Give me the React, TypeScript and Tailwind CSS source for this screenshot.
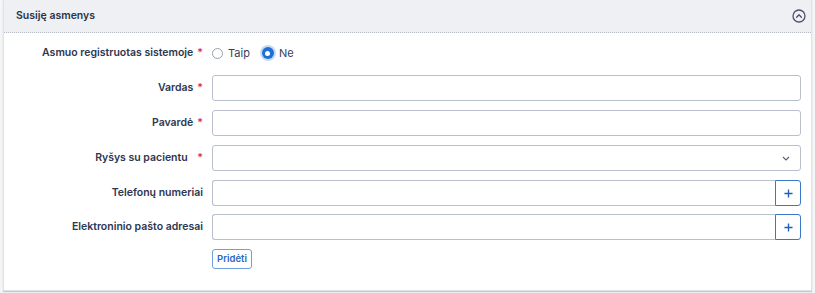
import React from "react";

const Req = () => <span className="text-[#d6343c] ml-[4px]">*</span>;

function Row({ label, children }: { label: React.ReactNode; children: React.ReactNode }) {
  return (
    <div className="flex items-center h-[26px]">
      <div className="w-[199px] shrink-0 text-right text-[10.5px] font-semibold text-[#2f3650]">{label}</div>
      <div className="ml-[9px] flex-1">{children}</div>
    </div>
  );
}

const inputCls = "w-full h-[26px] border border-[#b9bfcc] rounded-[3px] bg-white";

const Plus = () => (
  <div className="w-[26px] border border-[#3a78c8] rounded-r-[3px] flex items-center justify-center bg-white">
    <svg width="9" height="9" viewBox="0 0 10 10"><path d="M5 0.5 V9.5 M0.5 5 H9.5" stroke="#1f5fb8" strokeWidth="1.5" /></svg>
  </div>
);

export default function App() {
  return (
    <div className="w-[815px] h-[293px] bg-[#f4f5f7] px-[3px]" style={{ fontFamily: "Inter, 'Noto Sans', sans-serif" }}>
      <div className="bg-white border-x border-b border-[#dfe2e8] shadow-[0_1px_1px_rgba(0,0,0,0.18)] h-[291px]">
        <div className="h-[33px] bg-[#eef0f4] border-b border-dotted border-[#b8bcc6] flex items-center pl-[12px] pr-[5px] justify-between">
          <span className="text-[10.5px] font-semibold text-[#2d3447]">Susiję asmenys</span>
          <svg width="14" height="14" viewBox="0 0 14 14">
            <circle cx="7" cy="7" r="6" fill="none" stroke="#4a5169" strokeWidth="1.3" />
            <path d="M4.6 8.2 L7 5.8 L9.4 8.2" fill="none" stroke="#4a5169" strokeWidth="1.3" strokeLinecap="round" strokeLinejoin="round" />
          </svg>
        </div>
        <div className="pr-[10px]">
          <div className="flex items-center h-[20px] mt-[10px]">
            <div className="w-[199px] shrink-0 text-right text-[10.5px] font-semibold text-[#2f3650]">
              Asmuo registruotas sistemoje<Req />
            </div>
            <div className="ml-[9px] flex items-center text-[11px] text-[#3a4055]">
              <span className="w-[11px] h-[11px] rounded-full border border-[#9aa0ad] bg-white inline-block" />
              <span className="ml-[5px]">Taip</span>
              <span className="ml-[12px] w-[12px] h-[12px] rounded-full bg-[#1f6fd6] inline-flex items-center justify-center shadow-[0_0_0_2px_rgba(31,111,214,0.25)]">
                <span className="w-[5px] h-[5px] rounded-full bg-white" />
              </span>
              <span className="ml-[5px]">Ne</span>
            </div>
          </div>
          <div className="flex flex-col gap-[9px] mt-[12px]">
            <Row label={<>Vardas<Req /></>}>
              <div className={inputCls} />
            </Row>
            <Row label={<>Pavardė<Req /></>}>
              <div className={inputCls} />
            </Row>
            <Row label={<>Ryšys su pacientu <span className="ml-[3px]"></span><Req /></>}>
              <div className={inputCls + " flex items-center justify-end pr-[10px]"}>
                <svg width="8" height="5" viewBox="0 0 8 5">
                  <path d="M1 1 L4 4 L7 1" fill="none" stroke="#5a6073" strokeWidth="1.1" />
                </svg>
              </div>
            </Row>
            <Row label="Telefonų numeriai">
              <div className="flex h-[26px]">
                <div className="flex-1 border border-[#b9bfcc] rounded-l-[3px] border-r-0" />
                <Plus />
              </div>
            </Row>
            <div className="-mt-[1px]">
              <Row label="Elektroninio pašto adresai">
                <div className="flex h-[26px]">
                  <div className="flex-1 border border-[#b9bfcc] rounded-l-[3px] border-r-0" />
                  <Plus />
                </div>
              </Row>
            </div>
          </div>
          <div className="flex ml-[208px] mt-[9px]">
            <button className="h-[20px] px-[4px] border border-[#6f9fdc] rounded-[3px] text-[9.5px] font-semibold text-[#2a66c2] bg-white leading-none">
              Pridėti
            </button>
          </div>
        </div>
      </div>
    </div>
  );
}
